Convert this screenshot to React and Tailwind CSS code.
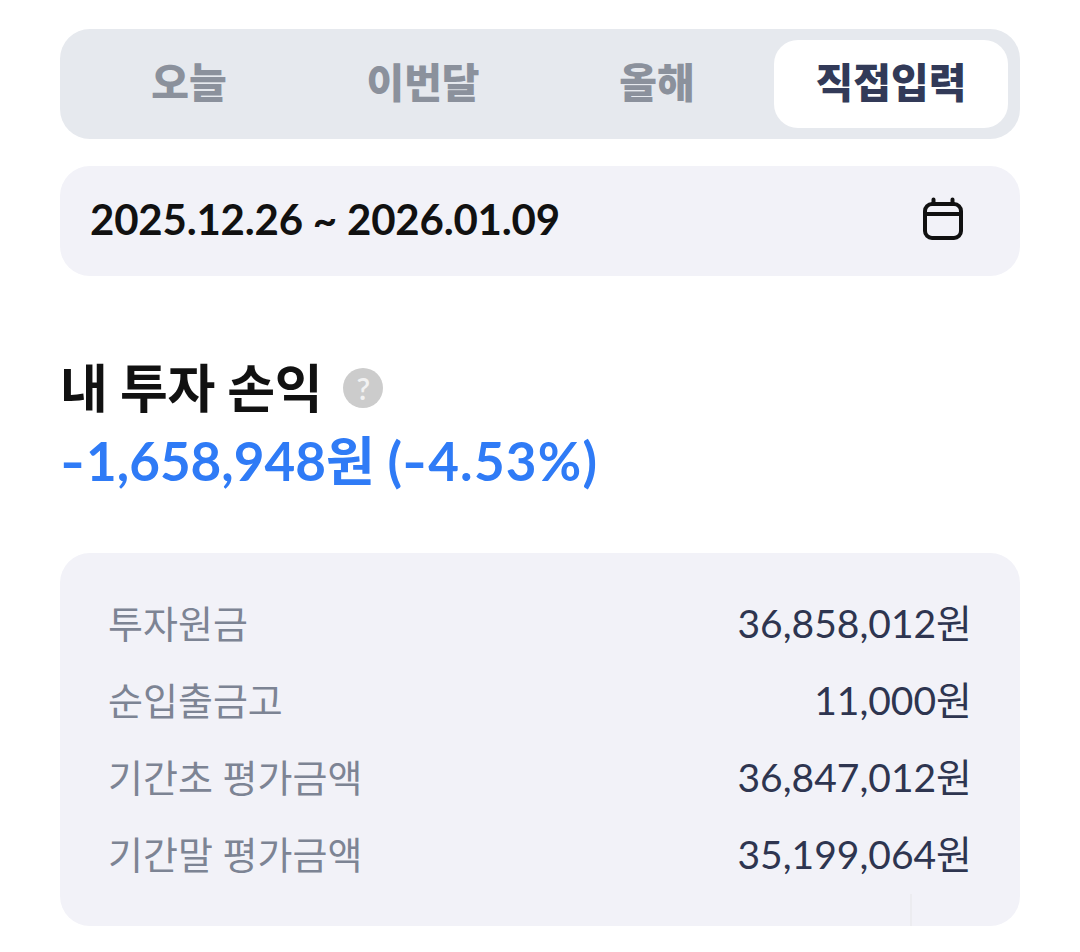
const font = "font-['Lato','Noto_Sans_CJK_KR',sans-serif]";

const tabs = ['오늘', '이번달', '올해', '직접입력'];

const rows = [
  { label: '투자원금', value: '36,858,012원' },
  { label: '순입출금고', value: '11,000원' },
  { label: '기간초 평가금액', value: '36,847,012원' },
  { label: '기간말 평가금액', value: '35,199,064원' },
];

const CalendarIcon = () => (
  <svg className="mb-[1px]" width="40" height="43" viewBox="0 0 40 43" fill="none" stroke="#111111" strokeWidth="4" strokeLinecap="round">
    <rect x="2" y="7" width="36" height="34" rx="7" />
    <path d="M2 17H38" />
    <path d="M10.5 2.5V7M29.5 2.5V7" />
  </svg>
);

export default function App() {
  return (
    <div className={`${font} w-[1080px] h-[952px] bg-white px-[60px] pt-[29px] overflow-hidden`}>
      <div className="flex h-[110px] items-center justify-end rounded-[30px] bg-[#e6e9ee] px-[12px]">
        {tabs.map((tab, i) => (
          <div
            key={tab}
            className={
              i === 3
                ? 'flex h-[88px] w-[234px] items-center justify-center rounded-[24px] bg-white pb-[3px] text-[41px] font-black text-[#323a58]'
                : 'flex h-[88px] w-[234px] items-center justify-center pb-[3px] text-[41px] font-extrabold text-[#8b919c]'
            }
          >
            {tab}
          </div>
        ))}
      </div>

      <div className="mt-[27px] flex h-[110px] items-center justify-between rounded-[30px] bg-[#f2f2f8] pb-[4px] pl-[30px] pr-[57px]">
        <span className="text-[42px] font-bold tracking-[-0.2px] text-[#111111]">2025.12.26 ~ 2026.01.09</span>
        <CalendarIcon />
      </div>

      <div className="mt-[80px] flex h-[64px] items-center">
        <span className="text-[52px] font-bold leading-none tracking-[-0.3px] text-[#111111]">내 투자 손익</span>
        <span className="ml-[21px] flex h-[40px] w-[40px] items-center justify-center rounded-full bg-[#cccccc] text-[30px] font-semibold text-[#f2f2f2]">?</span>
      </div>
      <div className="mt-[7px] flex h-[66px] items-center whitespace-pre text-[53px] font-bold leading-none text-[#2f7bf6]">
        <span className="inline-block w-[26px] origin-left scale-x-[1.27]">-</span>
        1,658,948원 (
        <span className="inline-block w-[26px] origin-left scale-x-[1.27]">-</span>
        <span className="tracking-[1.2px]">4.53%)</span>
      </div>

      <div className="relative mt-[60px] flex h-[373px] flex-col justify-center gap-[15px] rounded-[30px] bg-[#f2f2f8] pb-[2px] pl-[48px] pr-[48px]">
        {rows.map((row) => (
          <div key={row.label} className="flex h-[62px] items-center justify-between text-[38px]">
            <span className="text-[#7d8494]">{row.label}</span>
            <span className="text-[39px] text-[#2e3550]">{row.value}</span>
          </div>
        ))}
        <div className="absolute bottom-0 left-[850px] h-[32px] w-[2px] bg-[#ececf0]" />
      </div>
    </div>
  );
}
